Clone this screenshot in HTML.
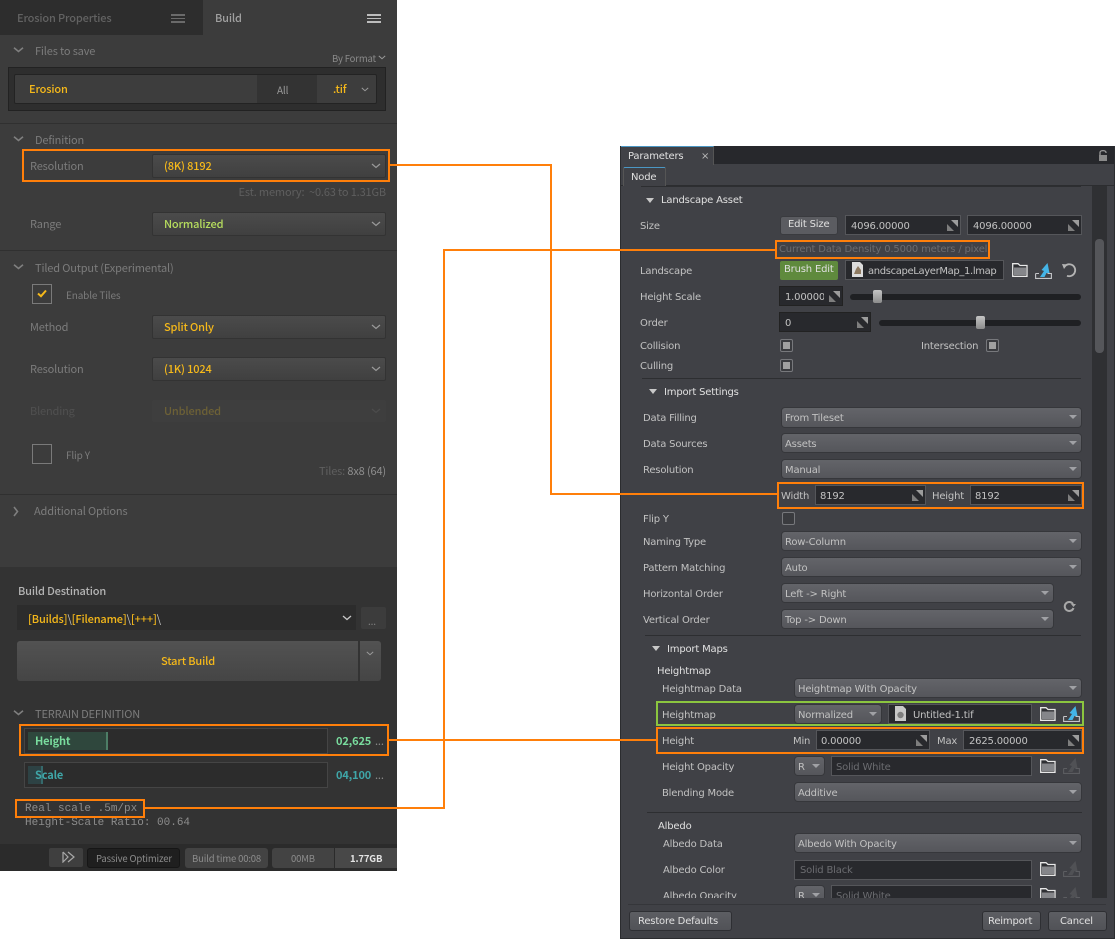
<!DOCTYPE html>
<html><head><meta charset="utf-8"><style>
html,body{margin:0;padding:0;background:#fff;width:1115px;height:939px;overflow:hidden}
body{position:relative;font-family:"Noto Sans CJK JP","Liberation Sans",sans-serif}
div,span,svg{position:absolute;box-sizing:border-box}
.t{white-space:nowrap;line-height:16px;height:16px;margin-top:1px}
#L .t{font-size:11px;letter-spacing:-.15px;color:#7c7c7c}
.R{font-family:"DejaVu Sans","Liberation Sans",sans-serif}
.R .t{font-size:10px;letter-spacing:-.18px;color:#c2c2c2;margin-top:2px}
.R .w{color:#e0e0e0}
.dd{background:linear-gradient(#4b4b4b,#404040);border:1px solid #333;border-radius:2px}
.o{border:2px solid #ff7f0a}
.y{color:#f6b91a!important;font-weight:500}
.rd{background:linear-gradient(#636469,#55565b);border-radius:3px;box-shadow:0 0 0 1px #36373b}
.rf{background:#28292d;border:1px solid #55565a}
.rb{background:linear-gradient(#5d5e63,#515257);border:1px solid #2e2f33;border-radius:3px}
.tri{width:0;height:0;border-left:4px solid transparent;border-right:4px solid transparent;border-top:5px solid #c8c8c8}
.ddt{width:0;height:0;border-left:4px solid transparent;border-right:4px solid transparent;border-top:4px solid #a0a1a5}
.cb{width:13px;height:13px;background:#3a3b3f;border:1px solid #77787c;border-radius:2px}
.cb i{position:absolute;left:2px;top:2px;width:7px;height:7px;background:#a0a0a0}
.sl{height:6px;background:#1f2023;border-radius:3px}
.th{width:9px;height:13px;background:linear-gradient(#c4c4c4,#8c8c8c);border-radius:2px}
.ln{background:#ff7f0a}
.dv{height:1px;background:#2d2e31}
.ld{height:1px;background:#303030}
</style></head><body>
<svg width="0" height="0" style="left:0;top:0">
<defs>
<symbol id="rs" viewBox="0 0 11 11"><path d="M4 0H11V7Z" fill="#9c9c9c"/><path d="M0 4V11H7Z" fill="#7e7e7e"/></symbol>
<symbol id="fo" viewBox="0 0 16 14"><path d="M.7.7H6L8 2.5H15V13.3H.7Z" fill="#2e2f33" stroke="#e8e8e8" stroke-width="1.3"/><path d="M2 4.5H14V12H2Z" fill="#85868a"/></symbol>
<symbol id="ar" viewBox="0 0 17 16"><path d="M.6 10.5V15.4H16.4V10.5H12.5M.6 10.5H4" fill="none" stroke="#c4c5c8" stroke-width="1.1"/><path d="M12.5 0L14.5 10H11.5L9.5 14L5 14L9 8L6.5 7Z" fill="#44b4e6"/></symbol>
<symbol id="ad" viewBox="0 0 17 16"><path d="M.6 10.5V15.4H16.4V10.5H12.5M.6 10.5H4" fill="none" stroke="#5c5d61" stroke-width="1.1"/><path d="M12.5 0L14.5 10H11.5L9.5 14L5 14L9 8L6.5 7Z" fill="#505155"/></symbol>
<symbol id="fi" viewBox="0 0 11 15"><path d="M0 0H8L11 3V15H0Z" fill="#dcdcdc"/><path d="M2 12L4 7L6 4L9 8V12Z" fill="#8f7b62"/></symbol>
<symbol id="fg" viewBox="0 0 11 15"><path d="M0 0H8L11 3V15H0Z" fill="#c8c8c8"/><circle cx="5.5" cy="9" r="3.2" fill="#7e7e7e"/></symbol>
<symbol id="ch" viewBox="0 0 10 6"><path d="M1 1L5 4.5L9 1" fill="none" stroke="#9a9a9a" stroke-width="1.2"/></symbol>
<symbol id="ct" viewBox="0 0 11 6"><path d="M1 .8L5.5 4.5L10 .8" fill="none" stroke="#7f7f7f" stroke-width="1.6"/></symbol>
</defs></svg>

<!-- LEFT PANEL -->
<div id="L" style="left:0;top:0;width:397px;height:871px;background:#3c3c3c;overflow:hidden">
<div style="left:0;top:0;width:203px;height:35px;background:#2d2d2d"></div>
<span class="t" style="left:17px;top:9px;color:#626262!important;font-weight:500">Erosion Properties</span>
<div style="left:171px;top:14px;width:14px;height:9px;border-top:2px solid #6a6a6a;border-bottom:2px solid #6a6a6a"></div><div style="left:171px;top:18px;width:14px;height:1px;background:#6a6a6a"></div>
<span class="t" style="left:215px;top:9px;color:#a0a0a0!important;font-weight:500">Build</span>
<div style="left:367px;top:14px;width:14px;height:9px;border-top:2px solid #bdbdbd;border-bottom:2px solid #bdbdbd"></div><div style="left:367px;top:18px;width:14px;height:1px;background:#bdbdbd"></div>

<svg style="left:13px;top:47px" width="11" height="6"><use href="#ct"/></svg>
<span class="t" style="left:35px;top:42px">Files to save</span>
<span class="t" style="left:332px;top:49px;font-size:9.5px!important;color:#8a8a8a">By Format</span>
<svg style="left:378px;top:55px" width="8" height="5"><use href="#ch"/></svg>
<div style="left:8px;top:67px;width:378px;height:44px;background:#2e2e2e;border:1px solid #222"></div>
<div style="left:14px;top:74px;width:363px;height:30px;background:#3d3d3d;border:1px solid #232323;border-radius:2px"></div>
<div style="left:257px;top:75px;width:60px;height:28px;background:#333"></div>
<span class="t y" style="left:29px;top:80px">Erosion</span>
<span class="t" style="left:277px;top:81px;font-size:10px!important;color:#9a9a9a">All</span>
<span class="t y" style="left:333px;top:80px">.tif</span>
<svg style="left:361px;top:87px" width="8" height="5"><use href="#ch"/></svg>
<div class="ld" style="left:0;top:123px;width:397px"></div>

<svg style="left:13px;top:136px" width="11" height="6"><use href="#ct"/></svg>
<span class="t" style="left:35px;top:131px">Definition</span>
<span class="t" style="left:30px;top:157px">Resolution</span>
<div class="dd" style="left:152px;top:154px;width:234px;height:24px"></div>
<span class="t y" style="left:164px;top:157px">(8K) 8192</span>
<svg style="left:371px;top:163px" width="10" height="6"><use href="#ch"/></svg>
<span class="t" style="right:11px;top:183px;color:#5f5f5f!important">Est. memory:&nbsp; ~0.63 to 1.31GB</span>
<span class="t" style="left:30px;top:215px">Range</span>
<div class="dd" style="left:152px;top:212px;width:234px;height:24px"></div>
<span class="t" style="left:164px;top:215px;color:#b6dd5e!important;font-weight:500">Normalized</span>
<svg style="left:371px;top:221px" width="10" height="6"><use href="#ch"/></svg>
<div class="ld" style="left:0;top:250px;width:397px"></div>

<svg style="left:13px;top:264px" width="11" height="6"><use href="#ct"/></svg>
<span class="t" style="left:35px;top:259px">Tiled Output (Experimental)</span>
<div style="left:32px;top:284px;width:20px;height:20px;border:1px solid #7a7a7a"></div>
<svg style="left:37px;top:289px" width="10" height="9"><path d="M1 4.5L4 7.2L9 1.5" fill="none" stroke="#f6b91a" stroke-width="2"/></svg>
<span class="t" style="left:66px;top:286px;font-size:10px!important">Enable Tiles</span>
<span class="t" style="left:30px;top:318px">Method</span>
<div class="dd" style="left:152px;top:315px;width:234px;height:24px"></div>
<span class="t y" style="left:164px;top:318px">Split Only</span>
<svg style="left:371px;top:324px" width="10" height="6"><use href="#ch"/></svg>
<span class="t" style="left:30px;top:360px">Resolution</span>
<div class="dd" style="left:152px;top:357px;width:234px;height:24px"></div>
<span class="t y" style="left:164px;top:360px">(1K) 1024</span>
<svg style="left:371px;top:366px" width="10" height="6"><use href="#ch"/></svg>
<span class="t" style="left:30px;top:402px;color:#505050!important">Blending</span>
<div style="left:152px;top:400px;width:234px;height:22px;background:#3e3e3e;border-radius:2px"></div>
<span class="t" style="left:164px;top:402px;color:#6d6136!important;font-weight:500">Unblended</span>
<svg style="left:371px;top:408px" width="10" height="6"><path d="M1 1L5 4.5L9 1" fill="none" stroke="#4c4c4c" stroke-width="1.2"/></svg>
<div style="left:32px;top:444px;width:20px;height:20px;border:1px solid #7a7a7a"></div>
<span class="t" style="left:66px;top:446px;font-size:10px!important">Flip Y</span>
<span class="t" style="right:11px;top:462px;color:#5f5f5f!important">Tiles: <b style="font-weight:400;color:#8f8f8f">8x8 (64)</b></span>
<div class="ld" style="left:0;top:494px;width:397px"></div>
<svg style="left:13px;top:506px" width="6" height="11"><path d="M1 1L4.5 5.5L1 10" fill="none" stroke="#7f7f7f" stroke-width="1.6"/></svg>
<span class="t" style="left:34px;top:502px">Additional Options</span>

<div style="left:0;top:567px;width:397px;height:277px;background:#333"></div>
<span class="t" style="left:18px;top:582px;color:#b4b4b4!important;font-weight:500">Build Destination</span>
<div style="left:17px;top:605px;width:339px;height:25px;background:#2c2c2c"></div>
<span class="t y" style="left:28px;top:610px">[Builds]<b style="font-weight:400;color:#c8c8c8">\</b>[Filename]<b style="font-weight:400;color:#c8c8c8">\</b>[+++]<b style="font-weight:400;color:#c8c8c8">\</b></span>
<svg style="left:342px;top:615px" width="10" height="6"><path d="M1 1L5 4.5L9 1" fill="none" stroke="#c8c8c8" stroke-width="1.3"/></svg>
<div style="left:361px;top:607px;width:25px;height:22px;background:#3c3c3c;border-radius:2px"></div>
<span class="t" style="left:368px;top:612px;font-size:10px!important">...</span>
<div style="left:17px;top:641px;width:364px;height:40px;background:linear-gradient(#525252,#454545);border-radius:3px"></div>
<div style="left:358px;top:641px;width:2px;height:40px;background:#333"></div>
<svg style="left:366px;top:651px" width="8" height="5"><use href="#ch"/></svg>
<span class="t y" style="left:161px;top:652px">Start Build</span>

<svg style="left:13px;top:710px" width="11" height="6"><use href="#ct"/></svg>
<span class="t" style="left:35px;top:705px;color:#7c7c7c">TERRAIN DEFINITION</span>
<div style="left:24px;top:728px;width:304px;height:26px;background:#2c2c2c;border:1px solid #454545"></div>
<div style="left:28px;top:732px;width:80px;height:18px;background:#2f473d"></div>
<div style="left:106px;top:732px;width:2px;height:18px;background:#4d7d66"></div>
<span class="t" style="left:35px;top:732px;color:#79dc9e!important;font-weight:700">Height</span>
<span class="t" style="left:336px;top:732px;color:#79dc9e!important;font-weight:700">02,625</span>
<span class="t" style="left:375px;top:732px;color:#8a8a8a">...</span>
<div style="left:24px;top:762px;width:304px;height:26px;background:#2c2c2c;border:1px solid #454545"></div>
<div style="left:28px;top:766px;width:15px;height:18px;background:#2d4244"></div>
<div style="left:41px;top:766px;width:2px;height:18px;background:#35696b"></div>
<span class="t" style="left:35px;top:766px;color:#3fa6a8!important;font-weight:700">Scale</span>
<span class="t" style="left:336px;top:766px;color:#3fa6a8!important;font-weight:700">04,100</span>
<span class="t" style="left:375px;top:766px;color:#8a8a8a">...</span>
<span class="t" style="left:25px;top:800px;font:11px/16px 'Liberation Mono',monospace;letter-spacing:0;color:#8c8c8c">Real scale .5m/px</span>
<span class="t" style="left:25px;top:814px;font:11px/16px 'Liberation Mono',monospace;letter-spacing:0;color:#8c8c8c">Height-Scale Ratio: 00.64</span>

<div style="left:0;top:844px;width:397px;height:27px;background:#2b2b2b"></div>
<div style="left:49px;top:848px;width:34px;height:19px;background:#3f3f3f;border-radius:2px"></div>
<svg style="left:62px;top:851px" width="13" height="12"><path d="M1 1L6 6L1 11V1M6 1L12 6L6 11" fill="none" stroke="#a8a8a8" stroke-width="1.2"/></svg>
<div style="left:87px;top:848px;width:93px;height:20px;background:#1f1f1f;border:1px solid #161616;border-radius:3px"></div>
<span class="t" style="left:96px;top:849px;font-size:9.5px!important;color:#8c8c8c">Passive Optimizer</span>
<div style="left:185px;top:848px;width:83px;height:20px;background:#434343;border-radius:3px"></div>
<span class="t" style="left:192px;top:849px;font-size:9.5px!important;color:#8c8c8c">Build time 00:08</span>
<div style="left:272px;top:848px;width:62px;height:20px;background:#434343;border-radius:3px 0 0 3px"></div>
<span class="t" style="left:291px;top:849px;font-size:9.5px!important;color:#8c8c8c">00MB</span>
<div style="left:335px;top:848px;width:62px;height:20px;background:#484848"></div>
<span class="t" style="left:350px;top:849px;font-size:9.5px!important;color:#e4e4e4;font-weight:700">1.77GB</span>
</div>

<!-- RIGHT PANEL -->
<div class="R" style="left:620px;top:146px;width:495px;height:793px;background:#404146;border:1px solid #2b2c2f;border-top:0;overflow:hidden">
<div style="left:0;top:0;width:495px;height:18px;background:#27282c"></div>
<div style="left:0;top:0;width:93px;height:19px;background:#404146;border-top:1px solid #4b97c4;border-right:1px solid #555"></div>
<span class="t w" style="left:7px;top:1px">Parameters</span>
<span class="t" style="left:80px;top:1px;color:#bbb">×</span>
<svg style="left:477px;top:3px" width="10" height="13"><path d="M2 6V3.5C2 1 8 1 8 3.5V4" fill="none" stroke="#9a9a9a" stroke-width="1.3"/><path d="M1 6H9V12H1Z" fill="#8a8a8a"/></svg>
<div style="left:0;top:39px;width:495px;height:1px;background:#2c2d30"></div>
<div style="left:2px;top:21px;width:43px;height:19px;background:#404146;border:1px solid #555;border-top:1px solid #4b97c4;border-bottom:0;border-radius:2px 2px 0 0"></div>
<span class="t w" style="left:10px;top:22px">Node</span>
</div>

<div class="R" style="left:0;top:0;width:1115px;height:939px;clip-path:inset(186px 0 41px 0)">
<div style="left:1092px;top:186px;width:15px;height:712px;background:#2f3033"></div>
<div style="left:1095px;top:239px;width:9px;height:114px;background:#55565a;border-radius:4px"></div>
<div class="dv" style="left:641px;top:186px;width:440px"></div>

<div class="tri" style="left:646px;top:198px"></div>
<span class="t w" style="left:661px;top:191px">Landscape Asset</span>
<span class="t" style="left:640px;top:217px">Size</span>
<div class="rb" style="left:780px;top:216px;width:58px;height:19px;background:#5b5c61;border-color:#3a3b3f"></div>
<span class="t w" style="left:788px;top:215px">Edit Size</span>
<div class="rf" style="left:845px;top:215px;width:116px;height:20px"></div>
<span class="t" style="left:851px;top:217px">4096.00000</span>
<svg style="left:947px;top:220px" width="11" height="11"><use href="#rs"/></svg>
<div class="rf" style="left:967px;top:215px;width:115px;height:20px"></div>
<span class="t" style="left:973px;top:217px">4096.00000</span>
<svg style="left:1068px;top:220px" width="11" height="11"><use href="#rs"/></svg>
<span class="t" style="left:779px;top:240px;color:#6b6c70">Current Data Density 0.5000 meters / pixel</span>

<span class="t" style="left:640px;top:262px">Landscape</span>
<div style="left:780px;top:261px;width:58px;height:19px;background:#5f8a3d;border-radius:2px"></div>
<span class="t w" style="left:784px;top:260px">Brush Edit</span>
<div class="rf" style="left:845px;top:260px;width:159px;height:20px"></div>
<svg style="left:852px;top:262px" width="11" height="15"><use href="#fi"/></svg>
<span class="t" style="left:868px;top:262px;letter-spacing:-.36px">andscapeLayerMap_1.lmap</span>
<svg style="left:1012px;top:263px" width="16" height="14"><use href="#fo"/></svg>
<svg style="left:1035px;top:263px" width="17" height="16"><use href="#ar"/></svg>
<svg style="left:1061px;top:262px" width="17" height="16"><path d="M3.5 4.5A6 6 0 1 1 6 13.8" fill="none" stroke="#b4b4b4" stroke-width="1.8"/><path d="M1 2L6.5 2.5L3 7Z" fill="#b4b4b4"/></svg>

<span class="t" style="left:640px;top:288px">Height Scale</span>
<div class="rf" style="left:779px;top:286px;width:64px;height:20px;border-color:#222"></div>
<span class="t" style="left:785px;top:288px;width:39px;overflow:hidden">1.00000</span>
<svg style="left:829px;top:291px" width="11" height="11"><use href="#rs"/></svg>
<div class="sl" style="left:850px;top:294px;width:231px"></div>
<div class="th" style="left:873px;top:290px"></div>

<span class="t" style="left:640px;top:314px">Order</span>
<div class="rf" style="left:779px;top:312px;width:92px;height:20px;border-color:#222"></div>
<span class="t" style="left:785px;top:314px">0</span>
<svg style="left:857px;top:317px" width="11" height="11"><use href="#rs"/></svg>
<div class="sl" style="left:879px;top:320px;width:202px"></div>
<div class="th" style="left:976px;top:316px"></div>

<span class="t" style="left:640px;top:337px">Collision</span>
<div class="cb" style="left:780px;top:339px"><i></i></div>
<span class="t" style="left:921px;top:337px">Intersection</span>
<div class="cb" style="left:986px;top:339px"><i></i></div>
<span class="t" style="left:640px;top:357px">Culling</span>
<div class="cb" style="left:780px;top:359px"><i></i></div>
<div class="dv" style="left:642px;top:378px;width:439px"></div>

<div class="tri" style="left:649px;top:389px"></div>
<span class="t w" style="left:664px;top:383px">Import Settings</span>

<span class="t" style="left:643px;top:409px">Data Filling</span>
<div class="rd" style="left:782px;top:408px;width:299px;height:19px"></div><div class="ddt" style="left:1069px;top:415px"></div>
<span class="t" style="left:785px;top:409px">From Tileset</span>
<span class="t" style="left:643px;top:435px">Data Sources</span>
<div class="rd" style="left:782px;top:434px;width:299px;height:18px"></div><div class="ddt" style="left:1069px;top:441px"></div>
<span class="t" style="left:785px;top:435px">Assets</span>
<span class="t" style="left:643px;top:461px">Resolution</span>
<div class="rd" style="left:782px;top:460px;width:299px;height:18px"></div><div class="ddt" style="left:1069px;top:467px"></div>
<span class="t" style="left:785px;top:461px">Manual</span>

<span class="t" style="left:781px;top:487px">Width</span>
<div class="rf" style="left:815px;top:485px;width:111px;height:20px"></div>
<span class="t" style="left:820px;top:487px">8192</span>
<svg style="left:912px;top:490px" width="11" height="11"><use href="#rs"/></svg>
<span class="t" style="left:932px;top:487px">Height</span>
<div class="rf" style="left:970px;top:485px;width:112px;height:20px"></div>
<span class="t" style="left:975px;top:487px">8192</span>
<svg style="left:1068px;top:490px" width="11" height="11"><use href="#rs"/></svg>

<span class="t" style="left:643px;top:510px">Flip Y</span>
<div class="cb" style="left:782px;top:512px"></div>
<span class="t" style="left:643px;top:533px">Naming Type</span>
<div class="rd" style="left:782px;top:532px;width:299px;height:18px"></div><div class="ddt" style="left:1069px;top:539px"></div>
<span class="t" style="left:785px;top:533px">Row-Column</span>
<span class="t" style="left:643px;top:559px">Pattern Matching</span>
<div class="rd" style="left:782px;top:558px;width:299px;height:18px"></div><div class="ddt" style="left:1069px;top:565px"></div>
<span class="t" style="left:785px;top:559px">Auto</span>
<span class="t" style="left:643px;top:585px">Horizontal Order</span>
<div class="rd" style="left:782px;top:584px;width:271px;height:18px"></div><div class="ddt" style="left:1041px;top:591px"></div>
<span class="t" style="left:785px;top:585px">Left -&gt; Right</span>
<span class="t" style="left:643px;top:611px">Vertical Order</span>
<div class="rd" style="left:782px;top:610px;width:271px;height:18px"></div><div class="ddt" style="left:1041px;top:617px"></div>
<span class="t" style="left:785px;top:611px">Top -&gt; Down</span>
<svg style="left:1063px;top:600px" width="13" height="13"><path d="M10 4A4.5 4.5 0 1 0 10.5 8" fill="none" stroke="#a8a8a8" stroke-width="2"/><path d="M8 4H13L10.5 7Z" fill="#a8a8a8"/></svg>
<div class="dv" style="left:645px;top:635px;width:436px"></div>

<div class="tri" style="left:652px;top:646px"></div>
<span class="t w" style="left:667px;top:640px">Import Maps</span>
<span class="t w" style="left:657px;top:662px">Heightmap</span>
<span class="t" style="left:662px;top:680px">Heightmap Data</span>
<div class="rd" style="left:795px;top:679px;width:286px;height:18px"></div><div class="ddt" style="left:1069px;top:686px"></div>
<span class="t" style="left:798px;top:680px">Heightmap With Opacity</span>

<span class="t" style="left:662px;top:706px">Heightmap</span>
<div class="rd" style="left:795px;top:705px;width:86px;height:18px"></div><div class="ddt" style="left:869px;top:712px"></div>
<span class="t" style="left:798px;top:706px">Normalized</span>
<div class="rf" style="left:888px;top:704px;width:144px;height:20px"></div>
<svg style="left:895px;top:706px" width="11" height="15"><use href="#fg"/></svg>
<span class="t" style="left:913px;top:706px">Untitled-1.tif</span>
<svg style="left:1040px;top:707px" width="16" height="14"><use href="#fo"/></svg>
<svg style="left:1063px;top:706px" width="17" height="16"><use href="#ar"/></svg>

<span class="t" style="left:662px;top:732px">Height</span>
<span class="t" style="left:793px;top:732px">Min</span>
<div class="rf" style="left:816px;top:730px;width:114px;height:20px"></div>
<span class="t" style="left:821px;top:732px">0.00000</span>
<svg style="left:916px;top:735px" width="11" height="11"><use href="#rs"/></svg>
<span class="t" style="left:937px;top:732px">Max</span>
<div class="rf" style="left:963px;top:730px;width:119px;height:20px"></div>
<span class="t" style="left:969px;top:732px">2625.00000</span>
<svg style="left:1068px;top:735px" width="11" height="11"><use href="#rs"/></svg>

<span class="t" style="left:662px;top:758px">Height Opacity</span>
<div class="rd" style="left:795px;top:757px;width:29px;height:18px"></div><div class="ddt" style="left:812px;top:764px"></div>
<span class="t" style="left:798px;top:758px">R</span>
<div class="rf" style="left:831px;top:756px;width:201px;height:20px"></div>
<span class="t" style="left:836px;top:758px;color:#6b6c70">Solid White</span>
<svg style="left:1040px;top:759px" width="16" height="14"><use href="#fo"/></svg>
<svg style="left:1063px;top:758px" width="17" height="16"><use href="#ad"/></svg>

<span class="t" style="left:662px;top:784px">Blending Mode</span>
<div class="rd" style="left:795px;top:783px;width:286px;height:18px"></div><div class="ddt" style="left:1069px;top:790px"></div>
<span class="t" style="left:798px;top:784px">Additive</span>
<div class="dv" style="left:647px;top:812px;width:435px"></div>

<span class="t w" style="left:658px;top:817px">Albedo</span>
<span class="t" style="left:663px;top:835px">Albedo Data</span>
<div class="rd" style="left:795px;top:834px;width:286px;height:18px"></div><div class="ddt" style="left:1069px;top:841px"></div>
<span class="t" style="left:798px;top:835px">Albedo With Opacity</span>
<span class="t" style="left:663px;top:861px">Albedo Color</span>
<div class="rf" style="left:794px;top:860px;width:238px;height:20px"></div>
<span class="t" style="left:800px;top:861px;color:#6b6c70">Solid Black</span>
<svg style="left:1040px;top:862px" width="16" height="14"><use href="#fo"/></svg>
<svg style="left:1063px;top:861px" width="17" height="16"><use href="#ad"/></svg>
<span class="t" style="left:663px;top:887px">Albedo Opacity</span>
<div class="rd" style="left:795px;top:886px;width:29px;height:18px"></div><div class="ddt" style="left:812px;top:893px"></div>
<span class="t" style="left:798px;top:887px">R</span>
<div class="rf" style="left:831px;top:885px;width:201px;height:20px"></div>
<span class="t" style="left:836px;top:887px;color:#6b6c70">Solid White</span>
<svg style="left:1040px;top:888px" width="16" height="14"><use href="#fo"/></svg>
<svg style="left:1063px;top:887px" width="17" height="16"><use href="#ad"/></svg>
</div>

<div class="R" style="left:0;top:0;width:1115px;height:939px">
<div class="dv" style="left:628px;top:904px;width:478px;background:#35363a"></div>
<div class="rb" style="left:629px;top:911px;width:103px;height:20px"></div>
<span class="t w" style="left:638px;top:912px">Restore Defaults</span>
<div class="rb" style="left:982px;top:911px;width:59px;height:20px"></div>
<span class="t w" style="left:988px;top:912px">Reimport</span>
<div class="rb" style="left:1048px;top:911px;width:59px;height:20px"></div>
<span class="t w" style="left:1060px;top:912px">Cancel</span>

<!-- CONNECTORS -->
<div class="ln" style="left:389px;top:164px;width:163px;height:2px"></div>
<div class="ln" style="left:550px;top:164px;width:2px;height:331px"></div>
<div class="ln" style="left:550px;top:493px;width:229px;height:2px"></div>
<div class="ln" style="left:388px;top:739px;width:269px;height:2px"></div>
<div class="ln" style="left:145px;top:807px;width:300px;height:2px"></div>
<div class="ln" style="left:443px;top:249px;width:2px;height:560px"></div>
<div class="ln" style="left:443px;top:249px;width:332px;height:2px"></div>

<!-- HIGHLIGHT BOXES -->
<div class="o" style="left:775px;top:240px;width:215px;height:19px"></div>
<div class="o" style="left:777px;top:482px;width:307px;height:27px"></div>
<div class="o" style="left:656px;top:727px;width:428px;height:27px"></div>
<div class="o" style="left:656px;top:701px;width:428px;height:25px;border-color:#8bc53f"></div>
<div class="o" style="left:22px;top:149px;width:368px;height:33px"></div>
<div class="o" style="left:19px;top:724px;width:370px;height:32px"></div>
<div class="o" style="left:15px;top:799px;width:130px;height:19px"></div>
</div>
</body></html>
